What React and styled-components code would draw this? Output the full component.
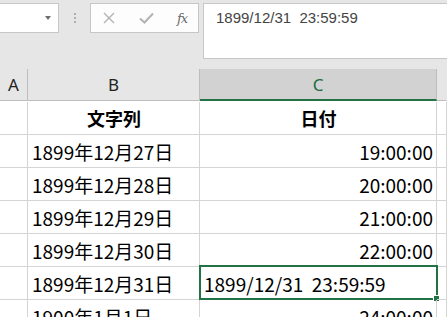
import React from "react";
import styled, { createGlobalStyle } from "styled-components";

const Global = createGlobalStyle`
  html, body { margin: 0; padding: 0; background: #fff; overflow: hidden; }
  body { width: 447px; height: 317px; }
`;

const Page = styled.div`
  width: 447px;
  height: 317px;
  overflow: hidden;
  background: #fff;
`;

const Toolbar = styled.div`
  display: flex;
  align-items: flex-start;
  height: 69px;
  padding-top: 3px;
  box-sizing: border-box;
  background: #e6e6e6;
`;

const NameBox = styled.div`
  width: 59px;
  height: 30px;
  box-sizing: border-box;
  background: #fff;
  border: 1px solid #c6c6c6;
  border-left: none;
  display: flex;
  align-items: center;
  justify-content: flex-end;
  padding-right: 7px;
`;

const Caret = styled.div`
  width: 0;
  height: 0;
  border-left: 3.5px solid transparent;
  border-right: 3.5px solid transparent;
  border-top: 4px solid #6e6e6e;
`;

const Grip = styled.div`
  width: 31px;
  height: 30px;
  display: flex;
  flex-direction: column;
  align-items: center;
  justify-content: center;
  gap: 2px;
`;

const Dot = styled.span`
  width: 2px;
  height: 2px;
  background: #b0b0b0;
`;

const ButtonBox = styled.div`
  width: 109px;
  height: 30px;
  box-sizing: border-box;
  background: #fdfdfd;
  border: 1px solid #c6c6c6;
  display: flex;
  align-items: center;
  padding-left: 12px;
`;

const IconSlot = styled.div`
  width: ${(p) => p.$w}px;
  display: flex;
  align-items: center;
`;

const Fx = styled.span`
  font-family: "DejaVu Serif", "Liberation Serif", serif;
  font-style: italic;
  font-size: 13px;
  color: #6a6a6a;
  letter-spacing: -1px;
  line-height: 1;
`;

const FormulaBar = styled.div`
  flex: 1;
  margin-left: 4px;
  height: 56px;
  box-sizing: border-box;
  background: #fff;
  border: 1px solid #c6c6c6;
  border-right: none;
  padding: 5px 0 0 12px;
  font-family: "Liberation Sans", "Noto Sans", sans-serif;
  font-size: 15px;
  color: #444;
  white-space: pre;
`;

const Grid = styled.div`
  display: grid;
  grid-template-columns: 28px 172px 237px 1fr;
  grid-auto-rows: 33px;
`;

const Head = styled.div`
  height: 32px;
  box-sizing: border-box;
  background: ${(p) => (p.$active ? "#d2d2d2" : "#e6e6e6")};
  border-right: 1px solid ${(p) => (p.$last ? "transparent" : "#bdbdbd")};
  border-bottom: ${(p) => (p.$active ? "2px solid #217346" : "1px solid #bdbdbd")};
  display: flex;
  align-items: center;
  justify-content: center;
  font-family: "Noto Sans", "DejaVu Sans", sans-serif;
  font-size: 17px;
  color: ${(p) => (p.$active ? "#1e6b43" : "#222")};
  padding-top: ${(p) => (p.$active ? "1px" : "0")};
`;

const Cell = styled.div`
  position: relative;
  box-sizing: border-box;
  border-right: 1px solid #d4d4d4;
  border-bottom: 1px solid #d4d4d4;
  display: flex;
  align-items: center;
  justify-content: ${(p) =>
    p.$align === "right" ? "flex-end" : p.$align === "center" ? "center" : "flex-start"};
  padding: 0 3px 0 4px;
  font-family: "Noto Sans CJK JP", "Noto Sans", sans-serif;
  font-size: ${(p) => (p.$bold ? "18px" : "19px")};
  font-weight: ${(p) => (p.$bold ? 700 : 400)};
  color: #000;
  white-space: pre;
`;

const Selection = styled.div`
  position: absolute;
  top: -2px;
  left: -1px;
  right: -2px;
  bottom: -1px;
  border: 2px solid #217346;
  pointer-events: none;
`;

const Handle = styled.div`
  position: absolute;
  right: -4px;
  bottom: -4px;
  width: 5px;
  height: 5px;
  background: #217346;
  border: 1px solid #fff;
`;

const rows = [
  ["1899年12月27日", "19:00:00"],
  ["1899年12月28日", "20:00:00"],
  ["1899年12月29日", "21:00:00"],
  ["1899年12月30日", "22:00:00"],
  ["1899年12月31日", "1899/12/31  23:59:59", true],
  ["1900年1月1日", "24:00:00"],
];

export default function App() {
  return (
    <Page>
      <Global />
      <Toolbar>
        <NameBox>
          <Caret />
        </NameBox>
        <Grip>
          <Dot />
          <Dot />
          <Dot />
        </Grip>
        <ButtonBox>
          <IconSlot $w={36}>
            <svg width="12" height="12" viewBox="0 0 12 12">
              <path d="M1 1 L11 11 M11 1 L1 11" stroke="#b3b3b3" strokeWidth="1.4" fill="none" />
            </svg>
          </IconSlot>
          <IconSlot $w={38}>
            <svg width="15" height="12" viewBox="0 0 15 12">
              <path d="M1 6.5 L5.5 10.5 L14 1.5" stroke="#b3b3b3" strokeWidth="2" fill="none" />
            </svg>
          </IconSlot>
          <IconSlot $w={14}>
            <Fx>fx</Fx>
          </IconSlot>
        </ButtonBox>
        <FormulaBar>{"1899/12/31  23:59:59"}</FormulaBar>
      </Toolbar>
      <Grid>
        <Head>A</Head>
        <Head>B</Head>
        <Head $active>C</Head>
        <Head $last />
        <Cell />
        <Cell $align="center" $bold>文字列</Cell>
        <Cell $align="center" $bold>日付</Cell>
        <Cell />
        {rows.map(([b, c, sel]) => (
          <React.Fragment key={b}>
            <Cell />
            <Cell>{b}</Cell>
            <Cell $align={sel ? "left" : "right"}>
              {c}
              {sel && (
                <Selection>
                  <Handle />
                </Selection>
              )}
            </Cell>
            <Cell />
          </React.Fragment>
        ))}
      </Grid>
    </Page>
  );
}
